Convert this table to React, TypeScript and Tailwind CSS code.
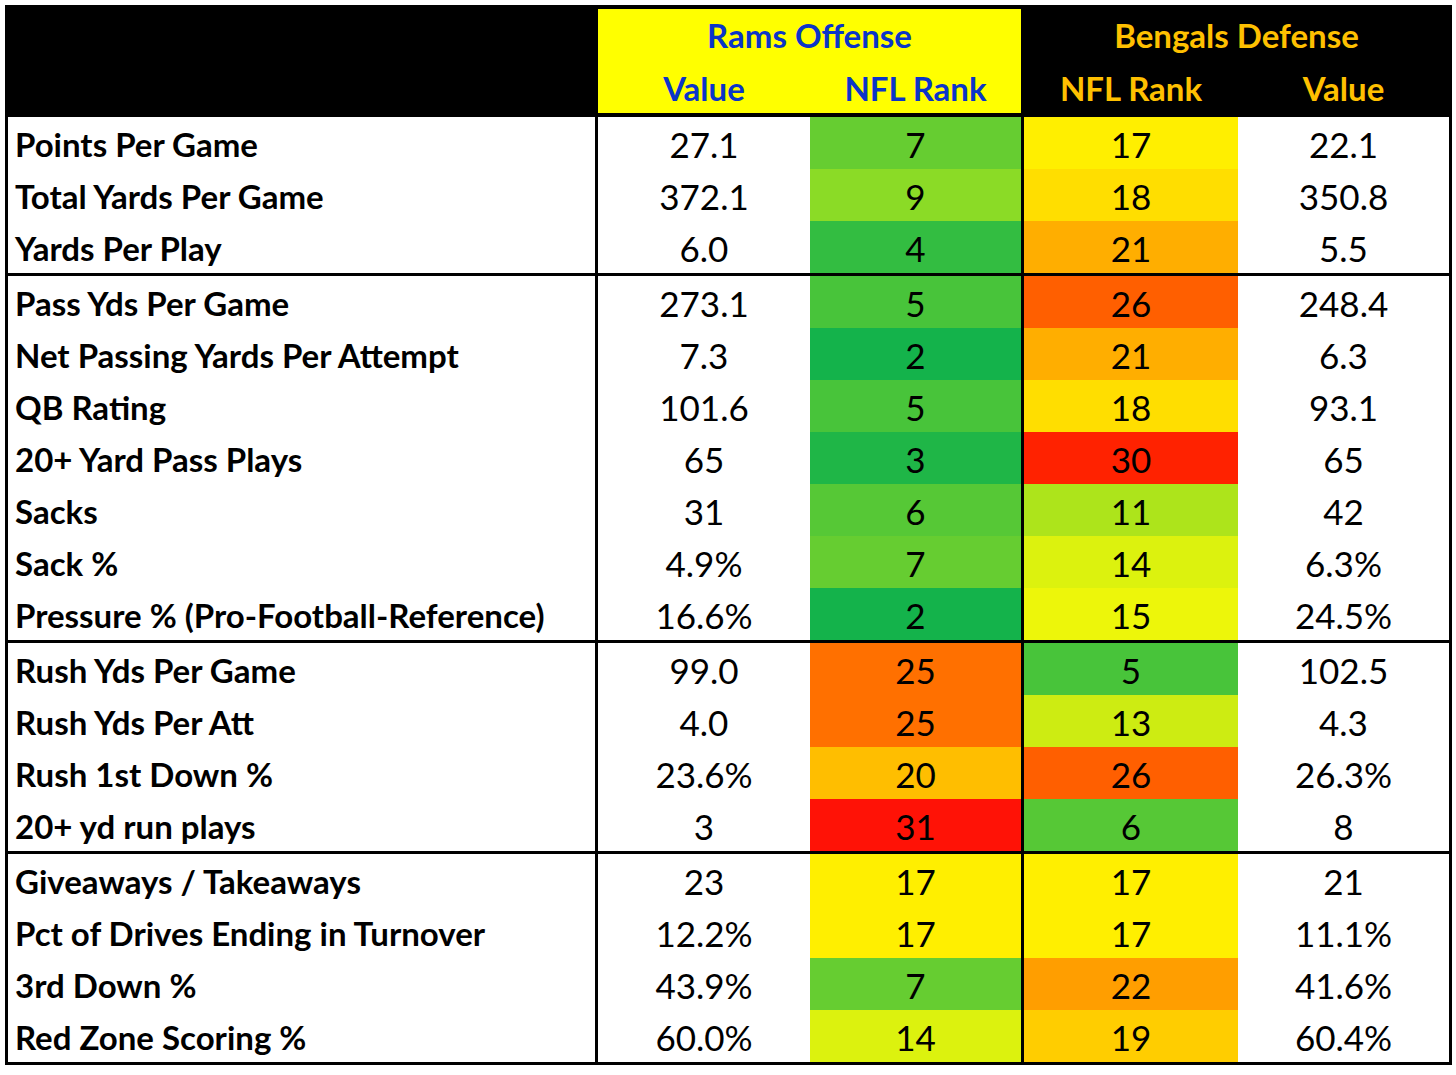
import React from "react";

type Row = { label: string; rv: string; rr: number; br: number; bv: string };

const rankColor: Record<number, string> = {
  2: "bg-[#14b34b]",
  3: "bg-[#1fb647]",
  4: "bg-[#33bd41]",
  5: "bg-[#48c43a]",
  6: "bg-[#56c836]",
  7: "bg-[#66cd31]",
  9: "bg-[#8bdb26]",
  11: "bg-[#ade41b]",
  13: "bg-[#cdec12]",
  14: "bg-[#dcf20e]",
  15: "bg-[#edf60a]",
  17: "bg-[#ffef00]",
  18: "bg-[#ffde00]",
  19: "bg-[#ffcd00]",
  20: "bg-[#ffbe00]",
  21: "bg-[#ffae00]",
  22: "bg-[#ff9e00]",
  25: "bg-[#ff7000]",
  26: "bg-[#ff5f00]",
  30: "bg-[#ff2200]",
  31: "bg-[#ff1206]",
};

const sections: Row[][] = [
  [
    { label: "Points Per Game", rv: "27.1", rr: 7, br: 17, bv: "22.1" },
    { label: "Total Yards Per Game", rv: "372.1", rr: 9, br: 18, bv: "350.8" },
    { label: "Yards Per Play", rv: "6.0", rr: 4, br: 21, bv: "5.5" },
  ],
  [
    { label: "Pass Yds Per Game", rv: "273.1", rr: 5, br: 26, bv: "248.4" },
    { label: "Net Passing Yards Per Attempt", rv: "7.3", rr: 2, br: 21, bv: "6.3" },
    { label: "QB Rating", rv: "101.6", rr: 5, br: 18, bv: "93.1" },
    { label: "20+ Yard Pass Plays", rv: "65", rr: 3, br: 30, bv: "65" },
    { label: "Sacks", rv: "31", rr: 6, br: 11, bv: "42" },
    { label: "Sack %", rv: "4.9%", rr: 7, br: 14, bv: "6.3%" },
    { label: "Pressure % (Pro-Football-Reference)", rv: "16.6%", rr: 2, br: 15, bv: "24.5%" },
  ],
  [
    { label: "Rush Yds Per Game", rv: "99.0", rr: 25, br: 5, bv: "102.5" },
    { label: "Rush Yds Per Att", rv: "4.0", rr: 25, br: 13, bv: "4.3" },
    { label: "Rush 1st Down %", rv: "23.6%", rr: 20, br: 26, bv: "26.3%" },
    { label: "20+ yd run plays", rv: "3", rr: 31, br: 6, bv: "8" },
  ],
  [
    { label: "Giveaways / Takeaways", rv: "23", rr: 17, br: 17, bv: "21" },
    { label: "Pct of Drives Ending in Turnover", rv: "12.2%", rr: 17, br: 17, bv: "11.1%" },
    { label: "3rd Down %", rv: "43.9%", rr: 7, br: 22, bv: "41.6%" },
    { label: "Red Zone Scoring %", rv: "60.0%", rr: 14, br: 19, bv: "60.4%" },
  ],
];

const font = { fontFamily: "Lato, 'Open Sans', sans-serif" };

function DataRow({ r }: { r: Row }) {
  return (
    <div className="flex h-[52px] text-black">
      <div className="flex w-[590px] items-center border-r-[3px] border-black pl-[7px] pt-[2px] text-[33px] font-bold leading-none">
        {r.label}
      </div>
      <div className="flex w-[212px] items-center justify-center pt-[2px] text-[35px] leading-none">{r.rv}</div>
      <div
        className={`flex w-[214px] items-center justify-center border-r-[3px] border-black pt-[2px] text-[35px] leading-none ${rankColor[r.rr]}`}
      >
        {r.rr}
      </div>
      <div className={`flex w-[214px] items-center justify-center pt-[2px] text-[35px] leading-none ${rankColor[r.br]}`}>
        {r.br}
      </div>
      <div className="flex flex-1 items-center justify-center pt-[2px] text-[35px] leading-none">{r.bv}</div>
    </div>
  );
}

export default function App() {
  return (
    <div className="min-h-[1075px] w-[1456px] bg-white pl-[5px] pt-[5px]" style={font}>
      <div className="flex w-[1447px] flex-col border-[3px] border-black bg-white">
        <div className="flex h-[109px] bg-black">
          <div className="w-[590px]" />
          <div className="mb-[4px] mt-[1px] flex w-[423px] flex-col bg-[#ffff00] text-[33px] font-bold leading-none text-[#0b35c8]">
            <div className="flex h-[52px] items-center justify-center">Rams Offense</div>
            <div className="flex h-[52px] pt-[3px]">
              <div className="flex w-[212px] items-center justify-center">Value</div>
              <div className="flex flex-1 items-center justify-center">NFL Rank</div>
            </div>
          </div>
          <div className="ml-[3px] flex flex-1 flex-col text-[33px] font-bold leading-none text-[#ffc000]">
            <div className="mt-[1px] flex h-[52px] items-center justify-center">Bengals Defense</div>
            <div className="flex h-[52px] pt-[3px]">
              <div className="flex w-[214px] items-center justify-center">NFL Rank</div>
              <div className="flex flex-1 items-center justify-center">Value</div>
            </div>
          </div>
        </div>
        {sections.map((sec, i) => (
          <div key={i} className={i > 0 ? "border-t-[3px] border-black" : ""}>
            {sec.map((r) => (
              <DataRow key={r.label} r={r} />
            ))}
          </div>
        ))}
      </div>
    </div>
  );
}
